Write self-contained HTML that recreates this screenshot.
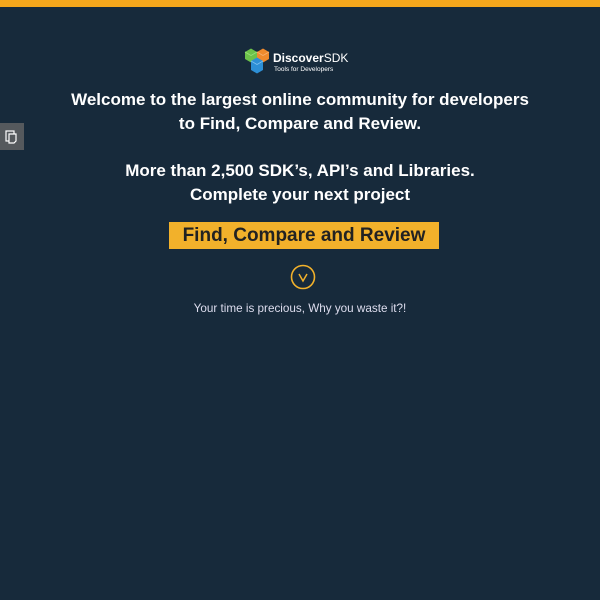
<!DOCTYPE html>
<html><head><style>
body{margin:0;width:600px;height:600px;background:#172a3b;font-family:"Liberation Sans",sans-serif;color:#fff;position:relative;overflow:hidden}
.bar{position:absolute;top:0;left:0;width:600px;height:7px;background:#f5a71c}
.logo{position:absolute;left:244px;top:47px;width:120px;height:28px}
.t{position:absolute;left:0;width:600px;text-align:center;font-size:17px;font-weight:bold;line-height:24px}
.btn{position:absolute;left:169px;top:222px;width:270px;height:27px;background:#f2b12b;color:#222;font-weight:bold;font-size:19px;line-height:27px;text-align:center}
.side{position:absolute;left:0;top:123px;width:24px;height:27px;background:#55595d}
.small{position:absolute;left:0;width:600px;top:302px;text-align:center;font-size:11.7px;color:#dde}
</style></head><body>
<div class="bar"></div>
<svg class="logo" viewBox="0 0 120 28">
<path d="M1 5l6-3.5 6 3.5v7l-6 3.5-6-3.5z" fill="#6cc24a"/>
<path d="M1 5l6 3.5 6-3.5" fill="none" stroke="#9be07a" stroke-width="0.8"/>
<path d="M13 5l6-3.5 6 3.5v7l-6 3.5-6-3.5z" fill="#f08a2c"/>
<path d="M13 5l6 3.5 6-3.5" fill="none" stroke="#f7b070" stroke-width="0.8"/>
<path d="M7 14l6-3.5 6 3.5v9l-6 3.5-6-3.5z" fill="#2d8fd6"/>
<path d="M7 14l6 3.5 6-3.5" fill="none" stroke="#7cc0f0" stroke-width="0.8"/>
<text x="29" y="15" font-family="Liberation Sans" font-size="12" font-weight="bold" fill="#fff">Discover<tspan font-weight="normal">SDK</tspan></text>
<text x="30" y="24" font-family="Liberation Sans" font-size="6.5" fill="#fff">Tools for Developers</text>
</svg>
<div class="side"><svg width="24" height="27" viewBox="0 0 24 27"><rect x="6" y="8" width="8" height="10" fill="none" stroke="#fff" stroke-width="1.2"/><path d="M9 11h7v7l-2 2h-5z" fill="#55595d" stroke="#fff" stroke-width="1.2"/></svg></div>
<div class="t" style="top:88px">Welcome to the largest online community for developers</div>
<div class="t" style="top:112px">to Find, Compare and Review.</div>
<div class="t" style="top:159px">More than 2,500 SDK’s, API’s and Libraries.</div>
<div class="t" style="top:183px">Complete your next project</div>
<div class="btn">Find, Compare and Review</div>
<svg style="position:absolute;left:290px;top:264px" width="26" height="26" viewBox="0 0 26 26"><circle cx="13" cy="13" r="11.5" fill="none" stroke="#f2b12b" stroke-width="1.6"/><path d="M9 10l4 7 4-7" fill="none" stroke="#f2b12b" stroke-width="1.5"/></svg>
<div class="small">Your time is precious, Why you waste it?!</div>
</body></html>
